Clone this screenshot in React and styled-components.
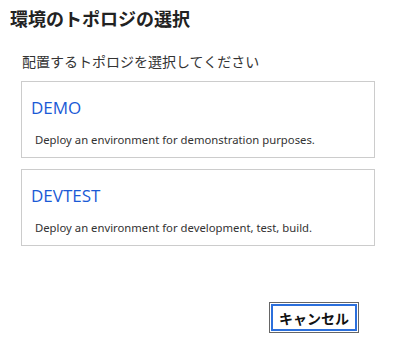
import React from 'react'
import styled, { createGlobalStyle } from 'styled-components'

const Global = createGlobalStyle`
  html, body {
    margin: 0;
    padding: 0;
    background: #ffffff;
  }
  body {
    font-family: "Noto Sans", "Noto Sans CJK JP", sans-serif;
    color: #222;
  }
`

const Dialog = styled.div`
  width: 399px;
  height: 357px;
  box-sizing: border-box;
  padding: 6px 24px 0 10px;
  display: flex;
  flex-direction: column;
`

const Title = styled.h1`
  margin: 0;
  font-size: 18px;
  line-height: 24px;
  font-weight: 700;
  color: #222;
  font-family: "Noto Sans CJK JP", sans-serif;
`

const Prompt = styled.p`
  margin: 21px 0 0 12px;
  font-size: 14px;
  line-height: 20px;
  color: #333;
  font-family: "Noto Sans CJK JP", sans-serif;
`

const List = styled.div`
  margin: 10px 0 0 11px;
  display: flex;
  flex-direction: column;
  gap: 11px;
`

const Card = styled.div`
  height: 77px;
  box-sizing: border-box;
  border: 1px solid #cccccc;
  padding: 15px 10px 0 9px;
  cursor: pointer;
`

const CardTitle = styled.div`
  font-family: "Open Sans", "Noto Sans", sans-serif;
  font-weight: 400;
  font-size: 17px;
  line-height: 22px;
  color: #1a5ad6;
`

const CardText = styled.div`
  margin: 13px 0 0 4px;
  font-size: 11.3px;
  line-height: 15px;
  color: #333;
`

const Footer = styled.div`
  margin-top: 56px;
  display: flex;
  justify-content: flex-end;
  padding-right: 16px;
`

const Button = styled.button`
  width: 90px;
  height: 31px;
  box-sizing: border-box;
  background: #fff;
  border: 1px solid #666;
  padding: 1px;
  cursor: pointer;
  display: flex;
`

const ButtonFace = styled.span`
  flex: 1;
  border: 2px solid #2b6fdc;
  display: flex;
  align-items: center;
  justify-content: center;
  font-family: "Noto Sans CJK JP", sans-serif;
  font-weight: 700;
  font-size: 14px;
  color: #111;
`

const topologies = [
  { name: 'DEMO', text: 'Deploy an environment for demonstration purposes.' },
  { name: 'DEVTEST', text: 'Deploy an environment for development, test, build.' },
]

export default function App() {
  return (
    <>
      <Global />
      <Dialog>
        <Title>環境のトポロジの選択</Title>
        <Prompt>配置するトポロジを選択してください</Prompt>
        <List>
          {topologies.map((t) => (
            <Card key={t.name}>
              <CardTitle>{t.name}</CardTitle>
              <CardText>{t.text}</CardText>
            </Card>
          ))}
        </List>
        <Footer>
          <Button>
            <ButtonFace>キャンセル</ButtonFace>
          </Button>
        </Footer>
      </Dialog>
    </>
  )
}
